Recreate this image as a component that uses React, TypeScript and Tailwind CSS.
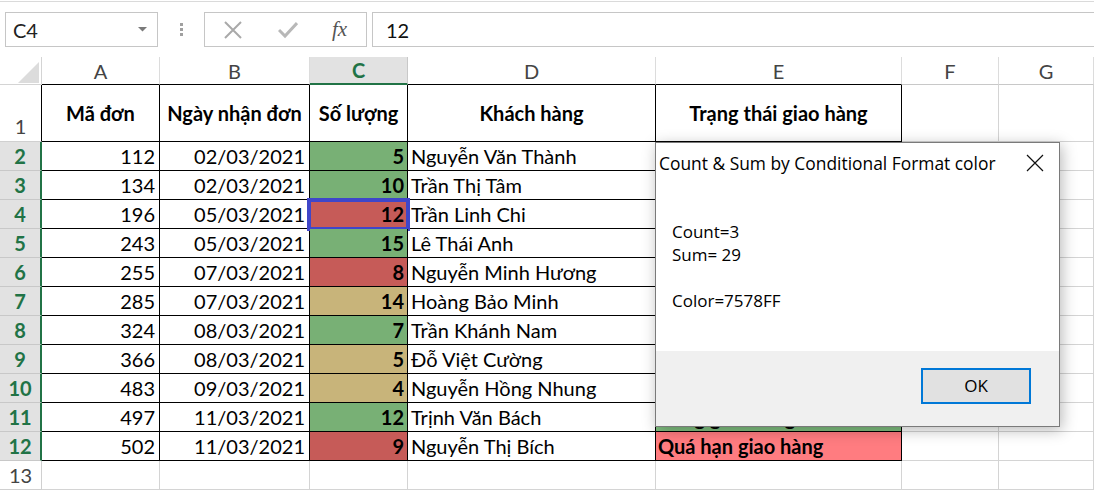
import React from 'react';

type Fill = 'g' | 'r' | 'y';

const rows: { a: number; b: string; c: number; d: string; e: string; fill: Fill }[] = [
  { a: 112, b: '02/03/2021', c: 5, d: 'Nguyễn Văn Thành', e: '', fill: 'g' },
  { a: 134, b: '02/03/2021', c: 10, d: 'Trần Thị Tâm', e: '', fill: 'g' },
  { a: 196, b: '05/03/2021', c: 12, d: 'Trần Linh Chi', e: '', fill: 'r' },
  { a: 243, b: '05/03/2021', c: 15, d: 'Lê Thái Anh', e: '', fill: 'g' },
  { a: 255, b: '07/03/2021', c: 8, d: 'Nguyễn Minh Hương', e: '', fill: 'r' },
  { a: 285, b: '07/03/2021', c: 14, d: 'Hoàng Bảo Minh', e: '', fill: 'y' },
  { a: 324, b: '08/03/2021', c: 7, d: 'Trần Khánh Nam', e: '', fill: 'g' },
  { a: 366, b: '08/03/2021', c: 5, d: 'Đỗ Việt Cường', e: '', fill: 'y' },
  { a: 483, b: '09/03/2021', c: 4, d: 'Nguyễn Hồng Nhung', e: '', fill: 'y' },
  { a: 497, b: '11/03/2021', c: 12, d: 'Trịnh Văn Bách', e: 'Đang giao hàng', fill: 'g' },
  { a: 502, b: '11/03/2021', c: 9, d: 'Nguyễn Thị Bích', e: 'Quá hạn giao hàng', fill: 'r' },
];

function cFill(f: Fill) {
  if (f === 'g') return 'bg-[#78b075]';
  if (f === 'r') return 'bg-[#c65b58]';
  return 'bg-[#c8b47a]';
}

function eFill(f: Fill) {
  if (f === 'g') return 'bg-[#80c080]';
  if (f === 'r') return 'bg-[#ff7c80]';
  return 'bg-[#ffe08a]';
}

function FormulaBar() {
  return (
    <div className="h-[57px] pt-px">
      <div className="h-[56px] border-t border-[#dadada] pt-[10px] flex items-start">
        <div className="ml-[5px] w-[153px] h-[35px] border border-[#c6c6c6] flex items-center justify-between pl-[7px] pr-[10px] text-[20px] text-[#222]">
          <span>C4</span>
          <svg width="9" height="5" viewBox="0 0 9 5">
            <polygon points="0,0 9,0 4.5,4.5" fill="#7a7a7a" />
          </svg>
        </div>
        <div className="w-[46px] h-[35px] flex flex-col items-center justify-center gap-[2px]">
          <div className="w-[3px] h-[3px] bg-[#a0a0a0]" />
          <div className="w-[3px] h-[3px] bg-[#a0a0a0]" />
          <div className="w-[3px] h-[3px] bg-[#a0a0a0]" />
        </div>
        <div className="w-[163px] h-[35px] border border-[#c6c6c6] flex items-center">
          <div className="w-[56px] flex justify-center">
            <svg width="20" height="20" viewBox="0 0 20 20">
              <path d="M2 2 L18 18 M18 2 L2 18" stroke="#a9a9a9" strokeWidth="2" />
            </svg>
          </div>
          <div className="w-[54px] flex justify-center">
            <svg width="20" height="18" viewBox="0 0 20 18">
              <path d="M1 9 L7 15 L19 2" stroke="#b8b8b8" strokeWidth="3" fill="none" />
            </svg>
          </div>
          <div className="flex-1 flex justify-center text-[21px] italic text-[#555] font-['Liberation_Serif',serif] leading-none pr-[2px]">
            fx
          </div>
        </div>
        <div className="ml-[5px] flex-1 h-[35px] border-y border-l border-[#c6c6c6] flex items-center pl-[13px] text-[20px] text-[#111]">
          12
        </div>
      </div>
    </div>
  );
}

function Sheet() {
  const letters = ['A', 'B', 'C', 'D', 'E', 'F', 'G'];
  return (
    <div className="grid grid-cols-[42px_118px_150px_98px_248px_246px_97px_95px] grid-rows-[28px_57px_repeat(12,29px)] text-[20px] leading-[24px]">
      <div className="relative border-r border-b border-[#d4d4d4]">
        <svg className="absolute left-0 top-0" width="42" height="28" viewBox="0 0 42 28">
          <polygon points="39,5 39,26 18,26" fill="#dcdcdc" />
        </svg>
      </div>
      {letters.map((l, i) => {
        if (l === 'C') {
          return (
            <div
              key={l}
              className="flex items-center justify-center bg-[#e2e2e2] text-[#217346] font-bold border-r border-r-[#c8c8c8] border-b-2 border-b-[#217346]"
            >
              {l}
            </div>
          );
        }
        const tableCol = i <= 4;
        return (
          <div
            key={l}
            className={
              tableCol
                ? 'flex items-center justify-center text-[#444] border-r border-b border-r-[#dcdcdc] border-b-black'
                : 'flex items-center justify-center text-[#444] border-r border-b border-r-[#dcdcdc] border-b-[#c8c8c8]'
            }
          >
            {l}
          </div>
        );
      })}

      <div className="flex items-end justify-center pb-[3px] text-[#444] border-r border-b border-r-black border-b-[#d0d0d0]">1</div>
      {['Mã đơn', 'Ngày nhận đơn', 'Số lượng', 'Khách hàng', 'Trạng thái giao hàng'].map((t) => (
        <div key={t} className="flex items-center justify-center font-bold whitespace-nowrap border-r border-b border-black">
          {t}
        </div>
      ))}
      <div className="border-r border-b border-[#d4d4d4]" />
      <div className="border-r border-b border-[#d4d4d4]" />

      {rows.map((r, idx) => (
        <React.Fragment key={idx}>
          <div className="flex items-center justify-center bg-[#e2e2e2] text-[#217346] font-bold border-b border-b-[#c8c8c8] border-r-2 border-r-[#217346]">
            {idx + 2}
          </div>
          <div className="flex items-center justify-end pr-[4px] border-r border-b border-black">{r.a}</div>
          <div className="flex items-center justify-end pr-[4px] border-r border-b border-black">{r.b}</div>
          <div className={'relative flex items-center justify-end pr-[3px] font-bold border-r border-b border-black ' + cFill(r.fill)}>
            {r.c}
            {idx === 2 && (
              <div className="absolute -left-[3px] -right-[3px] -top-[2px] -bottom-[3px] border-[4px] border-[#3f46c9]" />
            )}
          </div>
          <div className="flex items-center pl-[3px] whitespace-nowrap border-r border-b border-black">{r.d}</div>
          <div className={'flex items-center pl-[2px] font-bold whitespace-nowrap border-r border-b border-black ' + eFill(r.fill)}>{r.e}</div>
          <div className="border-r border-b border-[#d4d4d4]" />
          <div className="border-r border-b border-[#d4d4d4]" />
        </React.Fragment>
      ))}

      <div className="flex items-center justify-center text-[#444] border-r border-b border-[#d0d0d0]">13</div>
      <div className="border-r border-b border-[#d4d4d4]" />
      <div className="border-r border-b border-[#d4d4d4]" />
      <div className="border-r border-b border-[#d4d4d4]" />
      <div className="border-r border-b border-[#d4d4d4]" />
      <div className="border-r border-b border-[#d4d4d4]" />
      <div className="border-r border-b border-[#d4d4d4]" />
      <div className="border-r border-b border-[#d4d4d4]" />
    </div>
  );
}

function Dialog() {
  return (
    <div className="absolute left-[655px] top-[142px] w-[405px] h-[285px] bg-white border border-[#7a7a7a] shadow-[2px_3px_14px_rgba(0,0,0,0.28)] flex flex-col font-['Open_Sans',sans-serif] text-black">
      <div className="h-[40px] flex items-center justify-between pl-[3px] pr-[15px] shrink-0">
        <span className="text-[17.4px] leading-[24px] whitespace-nowrap">Count &amp; Sum by Conditional Format color</span>
        <svg width="18" height="18" viewBox="0 0 18 18">
          <path d="M1 1 L17 17 M17 1 L1 17" stroke="#111" strokeWidth="1.2" />
        </svg>
      </div>
      <div className="flex-1 pl-[16px] pt-[37px] text-[17px] leading-[23px]">
        <div>Count=3</div>
        <div>Sum= 29</div>
        <div>&nbsp;</div>
        <div>Color=7578FF</div>
      </div>
      <div className="h-[75px] shrink-0 bg-[#f0f0f0] flex justify-end items-start pt-[17px] pr-[28px]">
        <div className="w-[110px] h-[36px] bg-[#e1e1e1] border-2 border-[#0078d7] flex items-center justify-center text-[17px]">
          OK
        </div>
      </div>
    </div>
  );
}

export default function App() {
  return (
    <div className="relative w-[1094px] h-[491px] overflow-hidden bg-white font-['Lato',sans-serif] text-black">
      <FormulaBar />
      <Sheet />
      <Dialog />
    </div>
  );
}
